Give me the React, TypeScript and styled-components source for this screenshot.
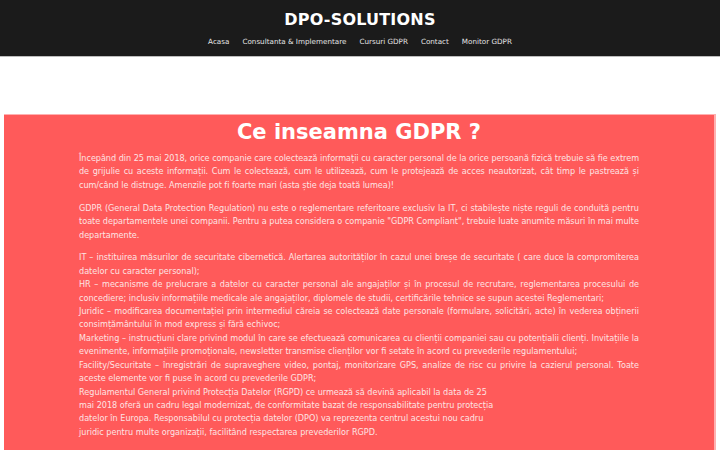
import React from "react";
import styled, { createGlobalStyle } from "styled-components";

const GlobalStyle = createGlobalStyle`
  html, body {
    margin: 0;
    padding: 0;
    background: #ffffff;
    font-family: "DejaVu Sans", "Liberation Sans", sans-serif;
  }
`;

const Header = styled.header`
  background-color: #1b1b1b;
  border-bottom: 1px solid #bdbdbd;
  height: 57px;
  display: flex;
  flex-direction: column;
  align-items: center;
  box-sizing: border-box;
  padding-top: 10px;
`;

const SiteTitle = styled.h1`
  margin: 0;
  font-size: 16px;
  font-weight: 700;
  color: #ffffff;
  letter-spacing: 0.2px;
  line-height: 20px;
`;

const Nav = styled.nav`
  display: flex;
  gap: 13px;
  margin-top: 7px;
`;

const NavLink = styled.a`
  font-size: 7.2px;
  color: #e4e4e4;
  text-decoration: none;
  line-height: 10px;
`;

const Spacer = styled.div`
  height: 57px;
`;

const Panel = styled.section`
  margin: 0 4px;
  background-color: #ff5a5a;
  border-top: 1px solid #ffb0b0;
  border-right: 2px solid #ffb0b0;
  padding: 4px 0 20px;
  min-height: 340px;
`;

const Title = styled.h2`
  margin: 0 0 7px;
  text-align: center;
  font-size: 21px;
  font-weight: 700;
  color: #ffffff;
  line-height: 26px;
`;

const Content = styled.div`
  width: 560px;
  margin: 0 auto;
`;

const Paragraph = styled.p`
  margin: 0 0 9.5px;
  font-size: 8.1px;
  line-height: 13.4px;
  color: #fde4e4;
  text-align: justify;
`;

const LeadParagraph = styled(Paragraph)`
  letter-spacing: -0.03px;
`;

const navItems = [
  "Acasa",
  "Consultanta & Implementare",
  "Cursuri GDPR",
  "Contact",
  "Monitor GDPR",
];

export default function App() {
  return (
    <>
      <GlobalStyle />
      <Header>
        <SiteTitle>DPO-SOLUTIONS</SiteTitle>
        <Nav>
          {navItems.map((item) => (
            <NavLink key={item} href="#">
              {item}
            </NavLink>
          ))}
        </Nav>
      </Header>
      <Spacer />
      <Panel>
        <Title>Ce inseamna GDPR ?</Title>
        <Content>
          <LeadParagraph>
            Începând din 25 mai 2018, orice companie care colectează informații
            cu caracter personal de la orice persoană fizică trebuie să fie
            extrem de grijulie cu aceste informații. Cum le colectează, cum le
            utilizează, cum le protejează de acces neautorizat, cât timp le
            pastrează și cum/când le distruge. Amenzile pot fi foarte mari
            (asta știe deja toată lumea)!
          </LeadParagraph>
          <Paragraph>
            GDPR (General Data Protection Regulation) nu este o reglementare
            referitoare exclusiv la IT, ci stabilește niște reguli de conduită
            pentru toate departamentele unei companii. Pentru a putea considera
            o companie "GDPR Compliant", trebuie luate anumite măsuri în mai
            multe departamente.
          </Paragraph>
          <Paragraph>
            IT – instituirea măsurilor de securitate cibernetică. Alertarea
            autorităților în cazul unei breșe de securitate ( care duce la
            compromiterea datelor cu caracter personal);
            <br />
            HR – mecanisme de prelucrare a datelor cu caracter personal ale
            angajaților și în procesul de recrutare, reglementarea procesului
            de concediere; inclusiv informațiile medicale ale angajaților,
            diplomele de studii, certificările tehnice se supun acestei
            Reglementari;
            <br />
            Juridic – modificarea documentației prin intermediul căreia se
            colectează date personale (formulare, solicitări, acte) în vederea
            obținerii consimțământului în mod express și fără echivoc;
            <br />
            Marketing – instrucțiuni clare privind modul în care se efectuează
            comunicarea cu clienții companiei sau cu potențialii clienți.
            Invitațiile la evenimente, informațiile promoționale, newsletter
            transmise clienților vor fi setate în acord cu prevederile
            regulamentului;
            <br />
            Facility/Securitate – înregistrări de supraveghere video, pontaj,
            monitorizare GPS, analize de risc cu privire la cazierul personal.
            Toate aceste elemente vor fi puse în acord cu prevederile GDPR;
            <br />
            Regulamentul General privind Protecția Datelor (RGPD) ce urmează să
            devină aplicabil la data de 25
            <br />
            mai 2018 oferă un cadru legal modernizat, de conformitate bazat de
            responsabilitate pentru protecția
            <br />
            datelor în Europa. Responsabilul cu protecția datelor (DPO) va
            reprezenta centrul acestui nou cadru
            <br />
            juridic pentru multe organizații, facilitând respectarea
            prevederilor RGPD.
          </Paragraph>
        </Content>
      </Panel>
    </>
  );
}
